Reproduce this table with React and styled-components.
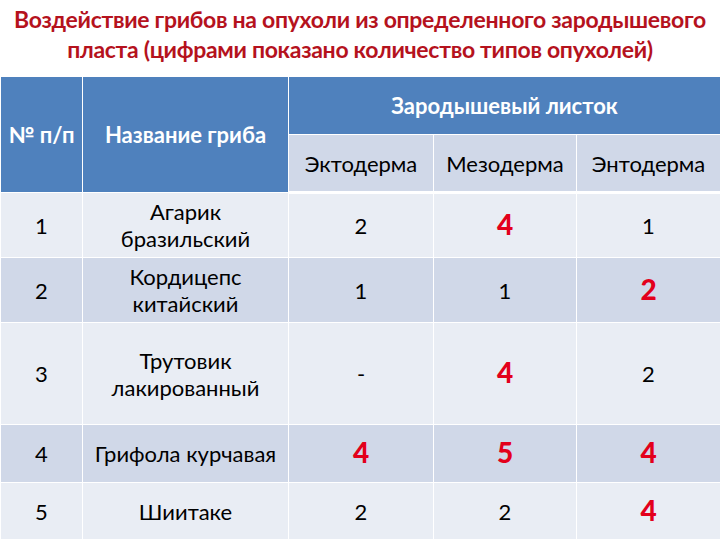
import React from "react";
import styled, { createGlobalStyle } from "styled-components";

const Global = createGlobalStyle`
  html, body { margin: 0; padding: 0; background: #ffffff; }
  body { font-family: "Lato", "Open Sans", sans-serif; }
`;

const Page = styled.div`
  width: 720px;
  height: 540px;
  overflow: hidden;
  display: flex;
  flex-direction: column;
`;

const Title = styled.h1`
  margin: 0;
  height: 77px;
  padding-top: 4px;
  box-sizing: border-box;
  text-align: center;
  color: #b5121d;
  font-family: "Lato", sans-serif;
  font-weight: 700;
  font-size: 23px;
  line-height: 30px;
  letter-spacing: -0.3px;
  white-space: nowrap;
`;

const Table = styled.table`
  width: 720px;
  border-collapse: collapse;
  table-layout: fixed;
  font-family: "Lato", sans-serif;
`;

const HeadCell = styled.th`
  background: #4f81bd;
  color: #ffffff;
  font-weight: 700;
  font-size: 22px;
  text-align: center;
  vertical-align: middle;
  border: 1.5px solid #ffffff;
  border-top: none;
  height: ${(p) => p.$h || 56}px;
  padding: 0;
  white-space: nowrap;
`;

const SubCell = styled.th`
  background: #d0d8e8;
  color: #000000;
  font-weight: 400;
  font-size: 22px;
  text-align: center;
  border: 1.5px solid #ffffff;
  border-bottom-width: 3px;
  height: 56px;
  padding: 0;
`;

const Row = styled.tr`
  background: ${(p) => (p.$dark ? "#d0d8e8" : "#e9edf4")};
  height: ${(p) => p.$h}px;
`;

const Cell = styled.td`
  color: #000000;
  font-size: 22px;
  line-height: 27px;
  text-align: center;
  vertical-align: middle;
  border: 1.5px solid #ffffff;
  padding: 0 2px;
  white-space: nowrap;
`;

const Hot = styled.span`
  color: #e3001b;
  font-weight: 900;
  font-size: 28px;
`;

const rows = [
  { n: "1", name: ["Агарик", "бразильский"], v: ["2", "4*", "1"], h: 65 },
  { n: "2", name: ["Кордицепс", "китайский"], v: ["1", "1", "2*"], h: 65, dark: true },
  { n: "3", name: ["Трутовик", "лакированный"], v: ["-", "4*", "2"], h: 102 },
  { n: "4", name: ["Грифола курчавая"], v: ["4*", "5*", "4*"], h: 58, dark: true },
  { n: "5", name: ["Шиитаке"], v: ["2", "2", "4*"], h: 57 },
];

const Value = ({ v }) =>
  v.endsWith("*") ? <Hot>{v.slice(0, -1)}</Hot> : <>{v}</>;

export default function App() {
  return (
    <Page>
      <Global />
      <Title>
        Воздействие грибов на опухоли из определенного зародышевого
        <br />
        пласта (цифрами показано количество типов опухолей)
      </Title>
      <Table>
        <colgroup>
          <col style={{ width: 82 }} />
          <col style={{ width: 206 }} />
          <col style={{ width: 145 }} />
          <col style={{ width: 143 }} />
          <col style={{ width: 144 }} />
        </colgroup>
        <thead>
          <tr>
            <HeadCell rowSpan={2}>№ п/п</HeadCell>
            <HeadCell rowSpan={2}>Название гриба</HeadCell>
            <HeadCell colSpan={3} $h={57}>
              Зародышевый листок
            </HeadCell>
          </tr>
          <tr>
            <SubCell>Эктодерма</SubCell>
            <SubCell>Мезодерма</SubCell>
            <SubCell>Энтодерма</SubCell>
          </tr>
        </thead>
        <tbody>
          {rows.map((r) => (
            <Row key={r.n} $dark={r.dark} $h={r.h}>
              <Cell>{r.n}</Cell>
              <Cell>
                {r.name.map((line, i) => (
                  <React.Fragment key={i}>
                    {i > 0 && <br />}
                    {line}
                  </React.Fragment>
                ))}
              </Cell>
              {r.v.map((v, i) => (
                <Cell key={i}>
                  <Value v={v} />
                </Cell>
              ))}
            </Row>
          ))}
        </tbody>
      </Table>
    </Page>
  );
}
